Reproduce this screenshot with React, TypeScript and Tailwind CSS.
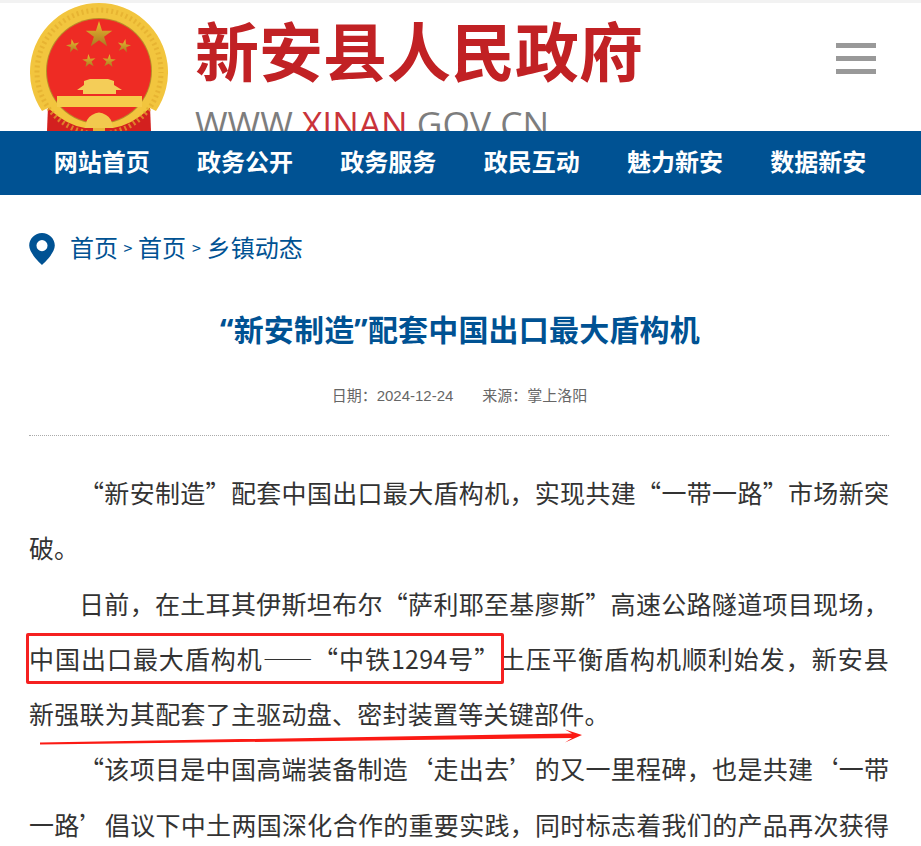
const navItems = ["网站首页", "政务公开", "政务服务", "政民互动", "魅力新安", "数据新安"];

const cjk = "font-['Noto_Sans_CJK_SC','Noto_Sans',sans-serif]";

function starPoints(cx: number, cy: number, r: number, rot = 0) {
  const pts: string[] = [];
  for (let i = 0; i < 10; i++) {
    const rad = i % 2 === 0 ? r : r * 0.382;
    const a = -Math.PI / 2 + (i * Math.PI) / 5 + rot;
    pts.push(`${(cx + rad * Math.cos(a)).toFixed(1)},${(cy + rad * Math.sin(a)).toFixed(1)}`);
  }
  return pts.join(" ");
}

const Emblem = () => (
  <svg width="138" height="128" viewBox="30 3 138 128" className="shrink-0">
    <defs>
      <linearGradient id="star" x1="0" y1="0" x2="0" y2="1">
        <stop offset="0" stopColor="#eeb92f" />
        <stop offset="1" stopColor="#a87a22" />
      </linearGradient>
    </defs>
    {/* ribbons */}
    <path d="M48 106 L47 131 L151 131 L150 106 Z" fill="#d3201f" />
    {/* gold ring, open at the bottom */}
    <path
      d="M42 111 A69 69 0 1 1 156 111 L150 108 Q132 125 113 128 L85 128 Q66 125 48 108 Z"
      fill="#f2c53e"
    />
    <circle cx="99" cy="72" r="62" fill="none" stroke="#e3ad2e" strokeWidth="5" strokeDasharray="2 3" strokeDashoffset="1" opacity="0.7" />
    <circle cx="99" cy="71" r="53" fill="#b98a2a" />
    <circle cx="99" cy="71" r="52" fill="#ee2b24" />
    {/* stars */}
    <polygon points={starPoints(99, 35, 14)} fill="url(#star)" />
    <polygon points={starPoints(73, 46, 7, -0.2)} fill="url(#star)" />
    <polygon points={starPoints(124, 46, 7, 0.2)} fill="url(#star)" />
    <polygon points={starPoints(89, 61, 7, -0.1)} fill="url(#star)" />
    <polygon points={starPoints(109, 61, 7, 0.1)} fill="url(#star)" />
    {/* gate */}
    <path d="M84 81 L90 79 L108 79 L114 81 L114 85 L122 90 L116 90 L116 94 L83 94 L83 90 L77 90 L84 85 Z" fill="#f4cd58" />
    <rect x="57" y="96" width="85" height="11" fill="#f6cb4b" />
    {/* gear at the bottom of the ring */}
    <path d="M85 128 Q86 118 92 115 Q99 110 106 115 Q112 118 113 128 Z" fill="#f2c94e" />
    <rect x="93" y="128" width="12" height="3" fill="#e9b23a" />
  </svg>
);

export default function App() {
  return (
    <div lang="zh-CN" className={`relative h-[846px] overflow-hidden bg-white ${cjk}`}>
      {/* Header */}
      <div className="h-[131px] overflow-hidden border-t-[3px] border-[#f2f2f2]">
        <div className="flex pl-[30px] pr-[45px]">
          <Emblem />
          <div className="ml-[27px] flex-1">
            <div className="text-[64px] font-bold leading-[90px] text-[#c12124] whitespace-nowrap">新安县人民政府</div>
            <div className="mt-[10px] font-['Open_Sans',sans-serif] text-[35.3px] leading-[40px] text-[#7d7d7d] whitespace-nowrap">
              WWW <span className="text-[#c9333a]">XINAN</span> GOV.CN
            </div>
          </div>
          <div className="mt-[40px] flex h-[31px] w-[40px] flex-col justify-between">
            <div className="h-[5px] bg-[#999999]" />
            <div className="h-[5px] bg-[#999999]" />
            <div className="h-[5px] bg-[#999999]" />
          </div>
        </div>
      </div>

      {/* Nav */}
      <div className="grid h-[64px] grid-cols-6 items-center bg-[#005293] pb-[4px] pl-[30px] pr-[31px]">
        {navItems.map((item) => (
          <a key={item} className="text-center text-[24px] font-bold text-white">
            {item}
          </a>
        ))}
      </div>

      <div className="pl-[29px] pr-[32px]">
        {/* Breadcrumb */}
        <div className="mt-[38px] flex h-[32px] items-center text-[24px] text-[#005293]">
          <svg width="26" height="32" viewBox="0 0 24 30" className="shrink-0">
            <path
              fillRule="evenodd"
              fill="#005293"
              d="M12 0C5.4 0 0 5.3 0 11.8 0 19.5 12 30 12 30s12-10.5 12-18.2C24 5.3 18.6 0 12 0zm0 6.6a5.2 5.2 0 1 1 0 10.4 5.2 5.2 0 0 1 0-10.4z"
            />
          </svg>
          <div className="mb-[4px] ml-[15px] flex items-center">
            <span>首页</span>
            <span className="mx-[5.5px] text-[16px]">&gt;</span>
            <span>首页</span>
            <span className="mx-[6px] text-[16px]">&gt;</span>
            <span>乡镇动态</span>
          </div>
        </div>

        {/* Title */}
        <h1 className="mt-[45px] pl-[2px] text-center font-['Noto_Sans','Noto_Sans_CJK_SC',sans-serif] text-[30px] font-bold leading-[40px] tracking-[0.18px] text-[#005293]">
          “新安制造”配套中国出口最大盾构机
        </h1>

        {/* Meta */}
        <div className="mt-[36px] flex justify-center gap-[29px] pl-[1px] font-['Liberation_Sans','Noto_Sans_CJK_SC',sans-serif] text-[15px] leading-[20px] text-[#666666]">
          <span>日期：2024-12-24</span>
          <span>来源：掌上洛阳</span>
        </div>

        <div className="mt-[29px] border-t border-dotted border-[#aaaaaa]" />

        {/* Article */}
        <div className="mt-[29px] text-[25px] leading-[55.3px] text-[#333333]">
          <p className="indent-[50px] text-justify">
            “新安制造”配套中国出口最大盾构机，实现共建“一带一路”市场新突破。
          </p>
          <p className="indent-[50px] text-justify tracking-[0.25px]">
            日前，在土耳其伊斯坦布尔“萨利耶至基廖斯”高速公路隧道项目现场，中国出口最大盾构机——“中铁1294号”土压平衡盾构机顺利始发，新安县新强联为其配套了主驱动盘、密封装置等关键部件。
          </p>
          <p className="indent-[50px] text-justify [text-align-last:justify]">
            “该项目是中国高端装备制造‘走出去’的又一里程碑，也是共建‘一带一路’倡议下中土两国深化合作的重要实践，同时标志着我们的产品再次获得
          </p>
        </div>
      </div>

      {/* Red annotations drawn over the article */}
      <div className="absolute left-[26px] top-[633px] h-[51px] w-[478px] rounded-[2px] border-[3px] border-[#f52020]" />
      <svg className="absolute left-0 top-0" width="921" height="846">
        <path d="M40 742.5 L572 733.5 L565 729.5 L582 735 L565 742.5 L572 738 L40 744.5 Z" fill="#fb1a14" />
      </svg>
    </div>
  );
}
